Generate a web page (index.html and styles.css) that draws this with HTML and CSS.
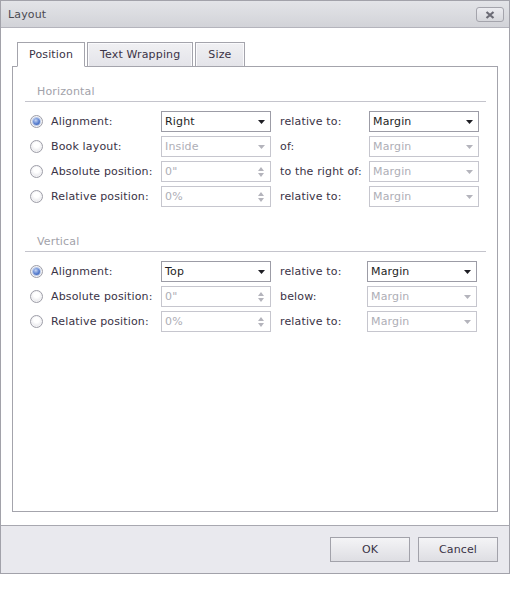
FILE: index.html
```html
<!DOCTYPE html>
<html lang="en">
<head>
  <meta charset="UTF-8">
  <meta name="viewport" content="width=device-width, initial-scale=1.0">
  <title>Layout</title>
  <link rel="stylesheet" href="styles.css">
</head>
<body>
  <div class="dialog">
    <!-- Title bar -->
    <div class="titlebar">
      <span class="title">Layout</span>
      <button class="close-btn">
        <svg width="10" height="8" viewBox="0 0 10 8"><path d="M1.5 1 L8.5 7 M8.5 1 L1.5 7" stroke="#6b6b75" stroke-width="2.2" stroke-linecap="butt"/></svg>
      </button>
    </div>

    <div class="dialog-body">
      <div class="tabs">
        <div class="tab active">Position</div>
        <div class="tab">Text Wrapping</div>
        <div class="tab">Size</div>
      </div>

      <div class="panel">
        <!-- Horizontal -->
        <div class="section">
          <div class="section-title">Horizontal</div>
          <div class="rows">
            <div class="row">
              <label class="option"><span class="radio checked"></span>Alignment:</label>
              <div class="field"><span>Right</span><svg class="arrow" width="7" height="4"><polygon points="0,0 7,0 3.5,4" fill="#1e1e24"/></svg></div>
              <span class="label2">relative to:</span>
              <div class="field"><span>Margin</span><svg class="arrow" width="7" height="4"><polygon points="0,0 7,0 3.5,4" fill="#1e1e24"/></svg></div>
            </div>
            <div class="row">
              <label class="option"><span class="radio"></span>Book layout:</label>
              <div class="field disabled"><span>Inside</span><svg class="arrow" width="7" height="4"><polygon points="0,0 7,0 3.5,4" fill="#b4b4bc"/></svg></div>
              <span class="label2">of:</span>
              <div class="field disabled"><span>Margin</span><svg class="arrow" width="7" height="4"><polygon points="0,0 7,0 3.5,4" fill="#b4b4bc"/></svg></div>
            </div>
            <div class="row">
              <label class="option"><span class="radio"></span>Absolute position:</label>
              <div class="field disabled"><span>0"</span><span class="spin"><svg width="6" height="4"><polygon points="3,0 6,4 0,4" fill="#b4b4bc"/></svg><svg width="6" height="4"><polygon points="0,0 6,0 3,4" fill="#b4b4bc"/></svg></span></div>
              <span class="label2">to the right of:</span>
              <div class="field disabled"><span>Margin</span><svg class="arrow" width="7" height="4"><polygon points="0,0 7,0 3.5,4" fill="#b4b4bc"/></svg></div>
            </div>
            <div class="row">
              <label class="option"><span class="radio"></span>Relative position:</label>
              <div class="field disabled"><span>0%</span><span class="spin"><svg width="6" height="4"><polygon points="3,0 6,4 0,4" fill="#b4b4bc"/></svg><svg width="6" height="4"><polygon points="0,0 6,0 3,4" fill="#b4b4bc"/></svg></span></div>
              <span class="label2">relative to:</span>
              <div class="field disabled"><span>Margin</span><svg class="arrow" width="7" height="4"><polygon points="0,0 7,0 3.5,4" fill="#b4b4bc"/></svg></div>
            </div>
          </div>
        </div>

        <!-- Vertical -->
        <div class="section vertical">
          <div class="section-title">Vertical</div>
          <div class="rows">
            <div class="row">
              <label class="option"><span class="radio checked"></span>Alignment:</label>
              <div class="field"><span>Top</span><svg class="arrow" width="7" height="4"><polygon points="0,0 7,0 3.5,4" fill="#1e1e24"/></svg></div>
              <span class="label2">relative to:</span>
              <div class="field"><span>Margin</span><svg class="arrow" width="7" height="4"><polygon points="0,0 7,0 3.5,4" fill="#1e1e24"/></svg></div>
            </div>
            <div class="row">
              <label class="option"><span class="radio"></span>Absolute position:</label>
              <div class="field disabled"><span>0"</span><span class="spin"><svg width="6" height="4"><polygon points="3,0 6,4 0,4" fill="#b4b4bc"/></svg><svg width="6" height="4"><polygon points="0,0 6,0 3,4" fill="#b4b4bc"/></svg></span></div>
              <span class="label2">below:</span>
              <div class="field disabled"><span>Margin</span><svg class="arrow" width="7" height="4"><polygon points="0,0 7,0 3.5,4" fill="#b4b4bc"/></svg></div>
            </div>
            <div class="row">
              <label class="option"><span class="radio"></span>Relative position:</label>
              <div class="field disabled"><span>0%</span><span class="spin"><svg width="6" height="4"><polygon points="3,0 6,4 0,4" fill="#b4b4bc"/></svg><svg width="6" height="4"><polygon points="0,0 6,0 3,4" fill="#b4b4bc"/></svg></span></div>
              <span class="label2">relative to:</span>
              <div class="field disabled"><span>Margin</span><svg class="arrow" width="7" height="4"><polygon points="0,0 7,0 3.5,4" fill="#b4b4bc"/></svg></div>
            </div>
          </div>
        </div>
      </div>
    </div>

    <div class="footer">
      <button class="btn">OK</button>
      <button class="btn">Cancel</button>
    </div>
  </div>
</body>
</html>
```

FILE: styles.css
```css
* {
  margin: 0;
  padding: 0;
  box-sizing: border-box;
}

body {
  background-color: #ffffff;
  font-family: "DejaVu Sans", Verdana, sans-serif;
  font-size: 11px;
  letter-spacing: 0.15px;
  color: #3a3346;
}

.dialog {
  width: 510px;
  height: 574px;
  border: 1px solid #a2a2aa;
  display: flex;
  flex-direction: column;
  background-color: #ffffff;
}

.titlebar {
  height: 27px;
  display: flex;
  align-items: center;
  justify-content: space-between;
  padding: 0 5px 0 7px;
  background: linear-gradient(#e3e4e8, #d2d3d8);
  border-bottom: 1px solid #b4b4bc;
}

.title {
  color: #4a4a52;
}

.close-btn {
  width: 28px;
  height: 15px;
  margin-top: 1px;
  border: 1px solid #a4a4ac;
  border-radius: 3px;
  background: linear-gradient(#ececf0, #d6d7dc);
  display: flex;
  align-items: center;
  justify-content: center;
}

.dialog-body {
  flex: 1;
  display: flex;
  flex-direction: column;
  padding: 14px 11px 13px 11px;
}

.tabs {
  display: flex;
  gap: 2px;
  padding-left: 5px;
  margin-bottom: -1px;
}

.tab {
  height: 25px;
  padding: 0 12px;
  display: flex;
  align-items: center;
  border: 1px solid #a4a4ac;
  background: linear-gradient(#f0f0f3, #e4e4e9);
  box-shadow: inset 1px 1px 0 #fafafc, inset -1px 0 0 #fafafc;
  color: #3a3346;
}

.tab.active {
  background: #ffffff;
  border-bottom-color: #ffffff;
  box-shadow: none;
  position: relative;
  padding: 0 11px;
}

.panel {
  flex: 1;
  border: 1px solid #a4a4ac;
  padding: 18px 11px 0 12px;
}

.section-title {
  color: #a2a2aa;
  padding: 0 0 3px 12px;
  line-height: 13px;
  border-bottom: 1px solid #c4c4cc;
}

.vertical {
  margin-top: 28px;
}

.rows {
  display: flex;
  flex-direction: column;
  gap: 4px;
  margin-top: 9px;
}

.row {
  display: grid;
  grid-template-columns: 136px 110px 98px 110px;
  height: 21px;
  align-items: center;
}

.vertical .row {
  grid-template-columns: 136px 110px 96px 110px;
}

.option {
  display: flex;
  align-items: center;
  gap: 8px;
  padding-left: 5px;
}

.radio {
  width: 13px;
  height: 13px;
  border-radius: 50%;
  border: 1px solid #9e9ea8;
  background: radial-gradient(circle at 50% 35%, #ffffff 30%, #d8d8de);
  box-shadow: inset 0 0 0 1px #f4f4f6;
  display: flex;
  align-items: center;
  justify-content: center;
}

.radio.checked::after {
  content: "";
  width: 7px;
  height: 7px;
  border-radius: 50%;
  background: radial-gradient(circle at 40% 35%, #c6d6f4, #5a80d0 55%, #2f55a6);
  box-shadow: 0 0 0 1px #b8c8e8;
}

.field {
  height: 21px;
  border: 1px solid #9c9ca6;
  display: flex;
  align-items: center;
  justify-content: space-between;
  padding: 0 5px 0 3px;
  color: #1e1e24;
  background-color: #ffffff;
}

.field.disabled {
  border-color: #c6c6ce;
  color: #aeaeb6;
}

.label2 {
  padding-left: 9px;
}

.spin {
  display: flex;
  flex-direction: column;
  gap: 2px;
  margin-right: 1px;
}

.footer {
  height: 48px;
  border-top: 1px solid #a8a8b0;
  background-color: #e9e9ee;
  display: flex;
  justify-content: flex-end;
  gap: 8px;
  padding: 11px 11px 0 0;
}

.btn {
  width: 80px;
  height: 25px;
  border: 1px solid #a2a2aa;
  background: linear-gradient(#f4f4f6, #dedee3);
  font-family: "DejaVu Sans", Verdana, sans-serif;
  font-size: 11px;
  letter-spacing: 0.15px;
  color: #3a3346;
}
```
